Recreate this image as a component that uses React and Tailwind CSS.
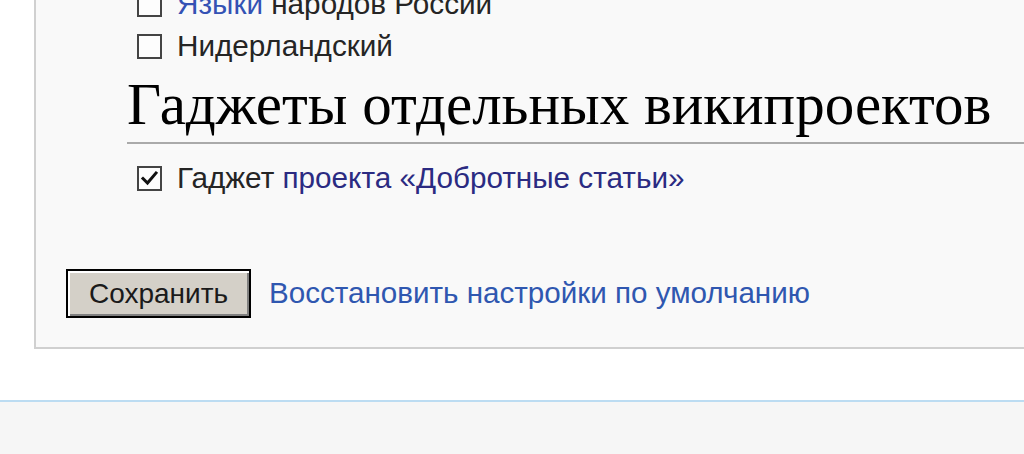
import React from "react";

function Box({ checked }) {
  return (
    <span className="relative inline-block w-[25px] h-[25px] border-2 border-[#444] bg-[#fdfdfd] shrink-0">
      {checked && (
        <svg className="absolute left-[1px] top-[1px]" width="19" height="19" viewBox="0 0 19 19">
          <path d="M3 9.5 L7.5 14 L16 4" fill="none" stroke="#111" strokeWidth="3" strokeLinecap="square" />
        </svg>
      )}
    </span>
  );
}

export default function App() {
  const sans = { fontFamily: '"Liberation Sans", Arial, sans-serif' };
  return (
    <div className="w-[1024px] h-[454px] bg-white overflow-hidden flex flex-col" style={sans}>
      <div className="ml-[34px] bg-[#f9f9f9] border-l-2 border-b-2 border-[#d0d0d0] h-[349px] flex flex-col">
        <div className="pl-[101px] flex flex-col text-[29.7px] text-[#252525]">
          <div className="h-[42px] -mt-[17px] flex items-center gap-[15px]">
            <Box />
            <span>
              <span className="text-[#3452b4]">Языки</span> народов России
            </span>
          </div>
          <div className="h-[42px] flex items-center gap-[15px]">
            <Box />
            <span>Нидерландский</span>
          </div>
        </div>
        <div className="pl-[91px] mt-[8px]">
          <h2
            className="text-[59px] leading-[59px] text-black pb-[8px] border-b-2 border-[#aaaaaa] whitespace-nowrap"
            style={{ fontFamily: '"Liberation Serif", "Times New Roman", serif' }}
          >
            Гаджеты отдельных википроектов
          </h2>
        </div>
        <div className="pl-[101px] mt-[13px] text-[29.7px] text-[#252525]">
          <div className="h-[42px] flex items-center gap-[15px]">
            <Box checked />
            <span>
              Гаджет <span className="text-[#2b2b82]">проекта «Добротные статьи»</span>
            </span>
          </div>
        </div>
        <div className="pl-[30px] mt-[70px] flex items-center gap-[18px]">
          <button className="w-[185px] h-[49px] bg-[#d4d0c8] border-2 border-black text-[28px] text-[#1a1a1a] shadow-[inset_2px_2px_0_#ffffff,inset_-2px_-2px_0_#808080] flex items-center justify-center">
            Сохранить
          </button>
          <span className="text-[29.6px] text-[#2f57b0] whitespace-nowrap">Восстановить настройки по умолчанию</span>
        </div>
      </div>
      <div className="mt-[51px] border-t-2 border-[#bcdcf2] bg-[#f6f6f6] flex-1"></div>
    </div>
  );
}
